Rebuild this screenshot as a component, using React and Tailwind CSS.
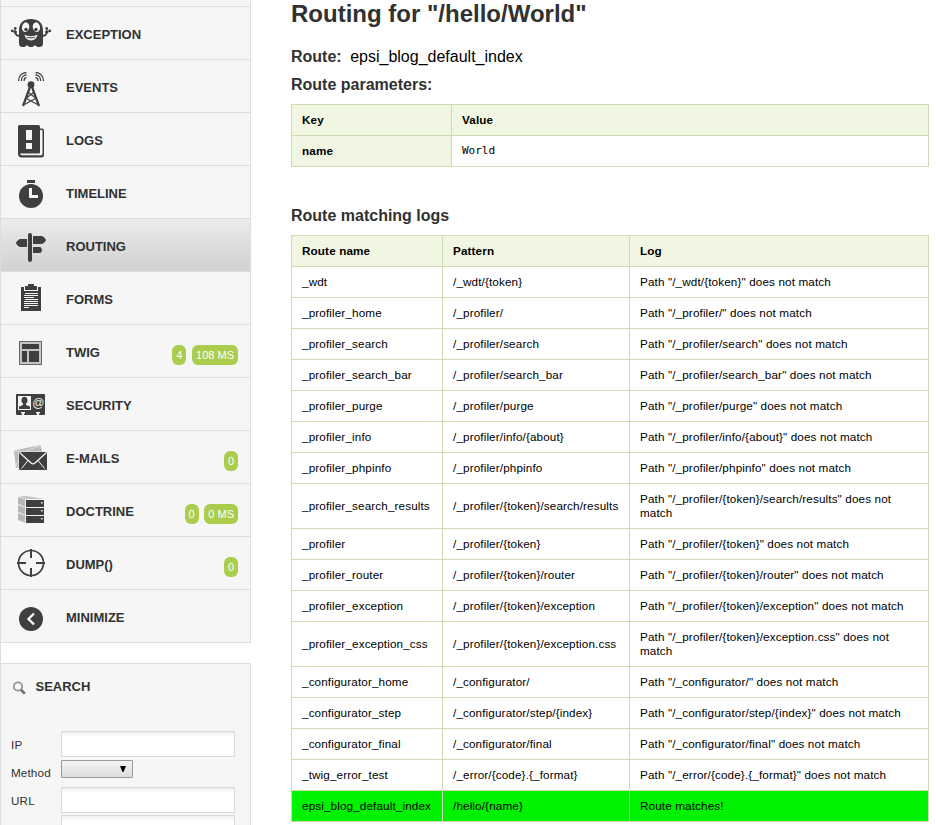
import React from "react";

const INK = "#3f3f3f";
const BG = "#f6f6f6";

const icons = {
  exception: (
    <g>
      <path fill={INK} d="M19 23.500C19 15.500 24 12 31 12s12 3.500 12 11.500V36c0 3-1.200 4-4 4-2 0-3-1-4-1.800-1 .8-2 1.800-4 1.800s-3-1-4-1.800c-1 .8-2 1.800-4 1.800-2.800 0-4-1-4-4z" />
      <path fill="none" stroke={INK} strokeWidth="1.700" d="M20 29c-3 0-4.500-1-5-4M42 29c3 0 4.500-1 5-4" />
      <path fill="none" stroke={INK} strokeWidth="1.200" d="M15 25.500l-3-1.500M15 25v-3.500M47 25.500l3-1.500M47 25v-3.500" />
      <circle cx="12.200" cy="23.800" r="1.400" fill={INK} />
      <circle cx="15.300" cy="21.200" r="1.300" fill={INK} />
      <circle cx="15.500" cy="25" r="1.500" fill={INK} />
      <circle cx="49.800" cy="23.800" r="1.400" fill={INK} />
      <circle cx="46.700" cy="21.200" r="1.300" fill={INK} />
      <circle cx="46.500" cy="25" r="1.500" fill={INK} />
      <ellipse cx="25.600" cy="20.200" rx="3.600" ry="4.900" transform="rotate(12 25.600 20.200)" fill={BG} />
      <ellipse cx="36.400" cy="20.200" rx="3.600" ry="4.900" transform="rotate(-12 36.400 20.200)" fill={BG} />
      <circle cx="26" cy="22.500" r="1.700" fill={INK} />
      <circle cx="36" cy="22.500" r="1.700" fill={INK} />
      <path fill={BG} d="M24.500 27.800c3.500 1.800 9.500 1.800 13 0-.5 3.500-3.500 5.700-6.500 5.700s-6-2.200-6.500-5.700z" />
      <path fill="none" stroke={INK} strokeWidth="1" d="M27 30.300c2.500.8 5.500.8 8 0" />
    </g>
  ),
  events: (
    <g fill="none" stroke={INK}>
      <path strokeWidth="1.300" d="M18.500 21c0-5 3.500-8.500 8-8.500M21.300 21c0-3.500 2.200-6 5.200-6M24 21c0-2 1-3.300 2.500-3.300M43.500 21c0-5-3.500-8.500-8-8.500M40.700 21c0-3.500-2.200-6-5.200-6M38 21c0-2-1-3.300-2.500-3.300" />
      <circle cx="31" cy="24.700" r="3.400" fill={INK} stroke="none" />
      <path strokeWidth="2.200" d="M30 27L23 46M32 27L39 46" />
      <path strokeWidth="1.200" d="M28.500 32.500l7 5.500M33.500 32.500l-7 5.500M26.500 38.500l11 6M35.500 38.500l-11 6" />
    </g>
  ),
  logs: (
    <g>
      <path fill={INK} d="M20 15.500h22a2 2 0 0 1 2 2v24.500a2.500 2.500 0 0 1-2.500 2.500H22a4 4 0 0 1-4-4V18z" />
      <path fill={BG} d="M40 17h1.700a.8.8 0 0 1 .8.8v22.900a1.500 1.500 0 0 1-1.500 1.500H22c-1 0-1.800-.6-2-2.200h20z" />
      <rect x="18" y="12" width="22" height="28.500" rx="1.500" fill={INK} />
      <rect x="26" y="17" width="6" height="10" fill={BG} />
      <rect x="26" y="30" width="6" height="6" fill={BG} />
    </g>
  ),
  timeline: (
    <g>
      <rect x="27" y="14" width="8" height="3" fill={INK} />
      <circle cx="31" cy="30" r="12" fill={INK} />
      <path fill={BG} d="M29 22h3v7h6v3h-9z" />
    </g>
  ),
  routing: (
    <g fill={INK}>
      <rect x="28" y="14" width="4" height="29" rx="2" />
      <path d="M27 20v8h-7c-1 0-4-3-4-4s3-4 4-4zM33 17h9c1 0 4 3 4 4s-3 4-4 4h-9zM33 28h7c.8 0 2 2 2 3s-1.200 3-2 3h-7z" />
    </g>
  ),
  forms: (
    <g>
      <rect x="21" y="15" width="20" height="24" fill={INK} />
      <path fill={BG} d="M24 15h14v4H24z" />
      <path fill={INK} d="M28 12h6v2h3v4H25v-4h3z" />
      <path fill="none" stroke={BG} d="M25 21.500h13M24 23.500h14M24 25.500h10M25 27.500h13M24 29.500h14M24 31.500h14M24 33.500h14M24 35.500h5" />
    </g>
  ),
  twig: (
    <g>
      <rect x="19.500" y="16.500" width="22" height="23" fill="#c4c4c4" stroke="#686868" />
      <path fill={INK} d="M22 19h17v5H22zM22 26h5v11h-5zM29 26h10v11H29z" />
    </g>
  ),
  security: (
    <g>
      <rect x="16" y="16" width="29" height="21" rx="1" fill={INK} />
      <path fill={BG} d="M18 18h13v14H18zM21 34h4v1.500h-1V37h-2v-1.500h-1zM36 34h4v1.500h-1V37h-2v-1.500h-1z" />
      <ellipse cx="24.500" cy="22.300" rx="3" ry="3.600" fill={INK} />
      <path fill={INK} d="M23 25h3v2l4 1.500V31H19v-2.500l4-1.500z" />
      <text x="32.300" y="28.500" fontSize="12" fontFamily="Liberation Sans, sans-serif" fill="#f0f0f0">@</text>
    </g>
  ),
  emails: (
    <g>
      <path fill="#bababa" d="M14 19.500L40.500 14l1.500 6.500H18.500v16l-2.500.5z" />
      <path fill="none" stroke="#dedede" d="M14.500 20l10 .5L41 14.500M16 35l2-5" />
      <rect x="19" y="21" width="28" height="18" rx="1" fill={INK} />
      <path fill="none" stroke={BG} strokeWidth="1.300" d="M19.500 21.500L31 32c1.500 1.200 2.500 1.200 4 0L46.500 21.500" />
      <path fill="none" stroke={BG} d="M21.500 37.500l6.500-8M44.500 37.500l-6.500-8" />
    </g>
  ),
  doctrine: (
    <g>
      <path fill="#b6b6b6" d="M18 13l8 2.500v23.500l-8-3z" />
      <path fill="#c2c2c2" d="M19 12.500l7-.5 18 3H26z" />
      <path fill="none" stroke={BG} d="M18 20.500l8 3M18 28.500l8 3M25.500 15.500V40" />
      <path fill={INK} d="M26 16h18v7H26zM26 24h18v7H26zM26 32h18v7H26z" />
      <path fill={BG} d="M41 18h1.500v1.500H41zM41 26h1.500v1.500H41zM41 34h1.500v1.500H41z" />
    </g>
  ),
  dump: (
    <g fill="none" stroke={INK}>
      <circle cx="31" cy="26" r="12.500" strokeWidth="1.700" />
      <path strokeWidth="2" d="M31 12v9M31 31v9M17 26h9M36 26h9" />
    </g>
  ),
  minimize: (
    <g>
      <circle cx="31" cy="29" r="12" fill={INK} />
      <path fill="none" stroke={BG} strokeWidth="2.400" d="M34 23.500L28.500 29l5.500 5.500" />
    </g>
  ),
};

const menu = [
  { id: "exception", label: "EXCEPTION" },
  { id: "events", label: "EVENTS" },
  { id: "logs", label: "LOGS" },
  { id: "timeline", label: "TIMELINE" },
  { id: "routing", label: "ROUTING", selected: true },
  { id: "forms", label: "FORMS" },
  { id: "twig", label: "TWIG", badges: ["4", "108 MS"] },
  { id: "security", label: "SECURITY" },
  { id: "emails", label: "E-MAILS", badges: ["0"] },
  { id: "doctrine", label: "DOCTRINE", badges: ["0", "0 MS"] },
  { id: "dump", label: "DUMP()", badges: ["0"] },
  { id: "minimize", label: "MINIMIZE" },
];

const routes = [
  ["_wdt", "/_wdt/{token}"],
  ["_profiler_home", "/_profiler/"],
  ["_profiler_search", "/_profiler/search"],
  ["_profiler_search_bar", "/_profiler/search_bar"],
  ["_profiler_purge", "/_profiler/purge"],
  ["_profiler_info", "/_profiler/info/{about}"],
  ["_profiler_phpinfo", "/_profiler/phpinfo"],
  ["_profiler_search_results", "/_profiler/{token}/search/results"],
  ["_profiler", "/_profiler/{token}"],
  ["_profiler_router", "/_profiler/{token}/router"],
  ["_profiler_exception", "/_profiler/{token}/exception"],
  ["_profiler_exception_css", "/_profiler/{token}/exception.css"],
  ["_configurator_home", "/_configurator/"],
  ["_configurator_step", "/_configurator/step/{index}"],
  ["_configurator_final", "/_configurator/final"],
  ["_twig_error_test", "/_error/{code}.{_format}"],
];

function MenuItem({ item }) {
  return (
    <li
      className={
        "flex h-[53px] border-b border-[#dddddd] " +
        (item.selected ? "bg-linear-to-b from-[#ececec] to-[#d1d1d1]" : "bg-[#f6f6f6]")
      }
    >
      <svg className="h-[52px] w-[65px] shrink-0" viewBox="1 0 65 52">
        {icons[item.id]}
      </svg>
      <span className="pt-5 text-[13px] leading-[16px] font-bold text-[#313131]">{item.label}</span>
      {item.badges && (
        <span className="ml-auto flex gap-[5.700px] pt-5 pr-3">
          {item.badges.map((b, i) => (
            <span key={i} className="h-5 rounded-[6px] bg-[#aacd4e] px-1 text-[11px] leading-[21px] text-white">
              {b}
            </span>
          ))}
        </span>
      )}
    </li>
  );
}

function Field({ label, children }) {
  return (
    <div className="flex h-7">
      <span className="w-[50px] shrink-0 pt-[7px] text-[11.7px] leading-[14px] tracking-[0.13px] text-[#313131]">
        {label}
      </span>
      {children}
    </div>
  );
}

function TextBox() {
  return (
    <span className="h-[26px] w-[174px] border border-[#dadada] bg-white bg-linear-to-b from-[#eeeeee] to-white to-[4px]" />
  );
}

function Cell({ head, children }) {
  return (
    <td
      className={
        "border-r border-b border-[#d0dbb3] px-[10px] py-2 text-left align-middle " +
        (head ? "bg-[#f1f6e2] font-bold" : "")
      }
    >
      {children}
    </td>
  );
}

const tableClass =
  "w-[638px] table-fixed border-separate border-spacing-0 border-t border-l border-[#d0dbb3] text-[11.7px] leading-[14px] tracking-[0.13px] text-black";

export default function App() {
  return (
    <div className="flex h-[825px] w-[936px] overflow-hidden border-l border-[#dddddd] bg-white font-['Liberation_Sans',Arial,sans-serif]">
      <aside className="w-[250px] shrink-0">
        <ul className="border-r border-[#dddddd]">
          <li className="h-[7px] border-b border-[#dddddd] bg-[#f6f6f6]" />
          {menu.map((item) => (
            <MenuItem key={item.id} item={item} />
          ))}
        </ul>
        <section className="mt-5 h-[170px] border-t border-r border-[#dddddd] bg-[#f6f6f6] pt-[15px] pl-[10px]">
          <h3 className="flex h-[52px] text-[13px] leading-[16px] font-bold text-[#313131]">
            <svg className="mt-px mr-[8.500px] h-4 w-4" viewBox="0 0 16 16" fill="none">
              <circle cx="7" cy="6.500" r="4.200" stroke="#929292" strokeWidth="1.800" />
              <path d="M10 9.800l3.800 3.800" stroke="#686868" strokeWidth="2.600" />
            </svg>
            SEARCH
          </h3>
          <Field label="IP">
            <TextBox />
          </Field>
          <Field label="Method">
            <span className="mt-px flex h-[18px] w-[72px] items-center justify-end rounded-[1px] border border-[#9a9a9a] bg-linear-to-b from-[#f5f5f5] to-[#dcdcdc] pr-[6px]">
              <svg className="h-[6px] w-[6px]" viewBox="0 0 6 6">
                <path d="M0 0h6L3.500 6h-1z" fill="#000" />
              </svg>
            </span>
          </Field>
          <Field label="URL">
            <TextBox />
          </Field>
          <Field label="">
            <TextBox />
          </Field>
        </section>
      </aside>

      <main className="pl-10">
        <h1 className="-mt-px h-[48px] text-[24px] leading-[30px] font-bold text-[#313131]">
          Routing for "/hello/World"
        </h1>
        <p className="h-[28px] text-[16px] leading-[20px]">
          <strong className="mr-[8.500px] text-[#313131]">Route:</strong>
          <span className="text-black">epsi_blog_default_index</span>
        </p>
        <h2 className="h-[29px] text-[16px] leading-[20px] font-bold text-[#313131]">Route parameters:</h2>
        <table className={tableClass}>
          <colgroup>
            <col className="w-[160px]" />
            <col />
          </colgroup>
          <tbody>
            <tr className="h-[31px]">
              <Cell head>Key</Cell>
              <Cell head>Value</Cell>
            </tr>
            <tr className="h-[31px]">
              <Cell head>name</Cell>
              <Cell>
                <code className="block font-['DejaVu_Sans_Mono',monospace] text-[11px] tracking-normal">World</code>
              </Cell>
            </tr>
          </tbody>
        </table>

        <h2 className="mt-[39px] h-[29px] text-[16px] leading-[20px] font-bold text-[#313131]">Route matching logs</h2>
        <table className={tableClass}>
          <colgroup>
            <col className="w-[151px]" />
            <col className="w-[187px]" />
            <col />
          </colgroup>
          <tbody>
            <tr>
              <Cell head>Route name</Cell>
              <Cell head>Pattern</Cell>
              <Cell head>Log</Cell>
            </tr>
            {routes.map(([name, pattern]) => (
              <tr key={name}>
                <Cell>{name}</Cell>
                <Cell>{pattern}</Cell>
                <Cell>{`Path "${pattern}" does not match`}</Cell>
              </tr>
            ))}
            <tr className="bg-[#00f200]">
              <Cell>epsi_blog_default_index</Cell>
              <Cell>{"/hello/{name}"}</Cell>
              <Cell>Route matches!</Cell>
            </tr>
          </tbody>
        </table>
      </main>
    </div>
  );
}
